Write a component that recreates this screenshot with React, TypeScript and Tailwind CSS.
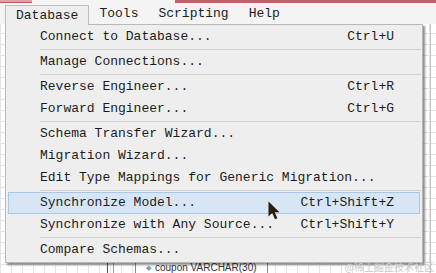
type Row =
  | { kind: "item"; label: string; shortcut?: string; active?: boolean }
  | { kind: "sep" };

const rows: Row[] = [
  { kind: "item", label: "Connect to Database...", shortcut: "Ctrl+U" },
  { kind: "sep" },
  { kind: "item", label: "Manage Connections..." },
  { kind: "sep" },
  { kind: "item", label: "Reverse Engineer...", shortcut: "Ctrl+R" },
  { kind: "item", label: "Forward Engineer...", shortcut: "Ctrl+G" },
  { kind: "sep" },
  { kind: "item", label: "Schema Transfer Wizard..." },
  { kind: "item", label: "Migration Wizard..." },
  { kind: "item", label: "Edit Type Mappings for Generic Migration..." },
  { kind: "sep" },
  { kind: "item", label: "Synchronize Model...", shortcut: "Ctrl+Shift+Z", active: true },
  { kind: "item", label: "Synchronize with Any Source...", shortcut: "Ctrl+Shift+Y" },
  { kind: "sep" },
  { kind: "item", label: "Compare Schemas..." },
];

const menus = ["Database", "Tools", "Scripting", "Help"];

function Cursor() {
  return (
    <svg width="13" height="19" viewBox="0 0 13 19" className="absolute left-[268px] top-[201px] z-30">
      <path d="M0.5 0.5 L0.5 15.5 L4.2 12 L7 18.2 L9.4 17.2 L6.7 11.2 L11.5 11.2 Z" fill="#2a1c10" />
    </svg>
  );
}

export default function App() {
  return (
    <div className="relative w-[436px] h-[273px] overflow-hidden bg-white bg-[linear-gradient(#e4e4e4_1px,transparent_1px),linear-gradient(90deg,#e4e4e4_1px,transparent_1px)] bg-[size:11px_11px] font-['Liberation_Mono',monospace] text-[13px] text-[#1c1c1c]">
      {/* canvas bits below the menu */}
      <div className="absolute left-[107px] top-[250px] w-px h-[30px] bg-[#555]" />
      <div className="absolute left-[113px] top-[250px] w-px h-[30px] bg-[#999]" />
      <div className="absolute left-[135px] top-[250px] w-[133px] h-[40px] border border-[#888] bg-white">
        <div className="mt-[12px] ml-[10px] flex items-center gap-1 whitespace-nowrap font-['Liberation_Sans',sans-serif] text-[10px] leading-[10px] text-[#333]">
          <span className="text-[7px] text-[#7a9acb]">◆</span>
          <span>coupon VARCHAR(30)</span>
        </div>
      </div>
      <div className="absolute left-[430px] top-[24px] w-px h-[260px] bg-[#c4c4c4]" />

      {/* title strip */}
      <div className="relative flex h-[3px]">
        <div className="w-[32px] bg-[#d9a3a8] border-b border-[#b8575f]" />
        <div className="w-[143px] bg-[#f4f4f4]" />
        <div className="flex-1 bg-[#bf636b]" />
      </div>

      {/* menu bar */}
      <div className="relative flex items-end h-[21px] bg-[#f4f4f4] pl-[5px]">
        {menus.map((m, i) => (
          <div
            key={m}
            className={
              i === 0
                ? "relative z-20 -mb-px h-[20px] px-[10px] flex items-center border-l border-t border-r border-[#bdbdbd] bg-[#eeeeee]"
                : "h-[20px] px-[10px] flex items-center"
            }
          >
            {m}
          </div>
        ))}
      </div>

      {/* dropdown */}
      <div className="relative z-10 ml-[5px] w-[418px] border border-[#b9b9b9] bg-[#eeeeee] pt-px pb-px shadow-[2px_2px_2px_rgba(0,0,0,0.45)]">
        {rows.map((r, i) =>
          r.kind === "sep" ? (
            <div key={i} className="h-[3px] flex items-center pl-[34px] pr-[1px]">
              <div className="h-px w-full bg-[#d2d2d2]" />
            </div>
          ) : (
            <div
              key={i}
              className={
                "mx-[2px] h-[22px] flex items-center justify-between pl-[31px] pr-[25px] border " +
                (r.active ? "bg-[#d7e5f4] border-[#a9c7e8]" : "border-transparent")
              }
            >
              <span>{r.label}</span>
              {r.shortcut && <span>{r.shortcut}</span>}
            </div>
          )
        )}
      </div>

      <Cursor />

      <div className="absolute right-[2px] top-[262px] z-30 font-['Noto_Sans_CJK_SC',sans-serif] text-[10px] leading-[10px] text-[#c9c9c9]">
        @稀土掘金技术社区
      </div>
    </div>
  );
}
